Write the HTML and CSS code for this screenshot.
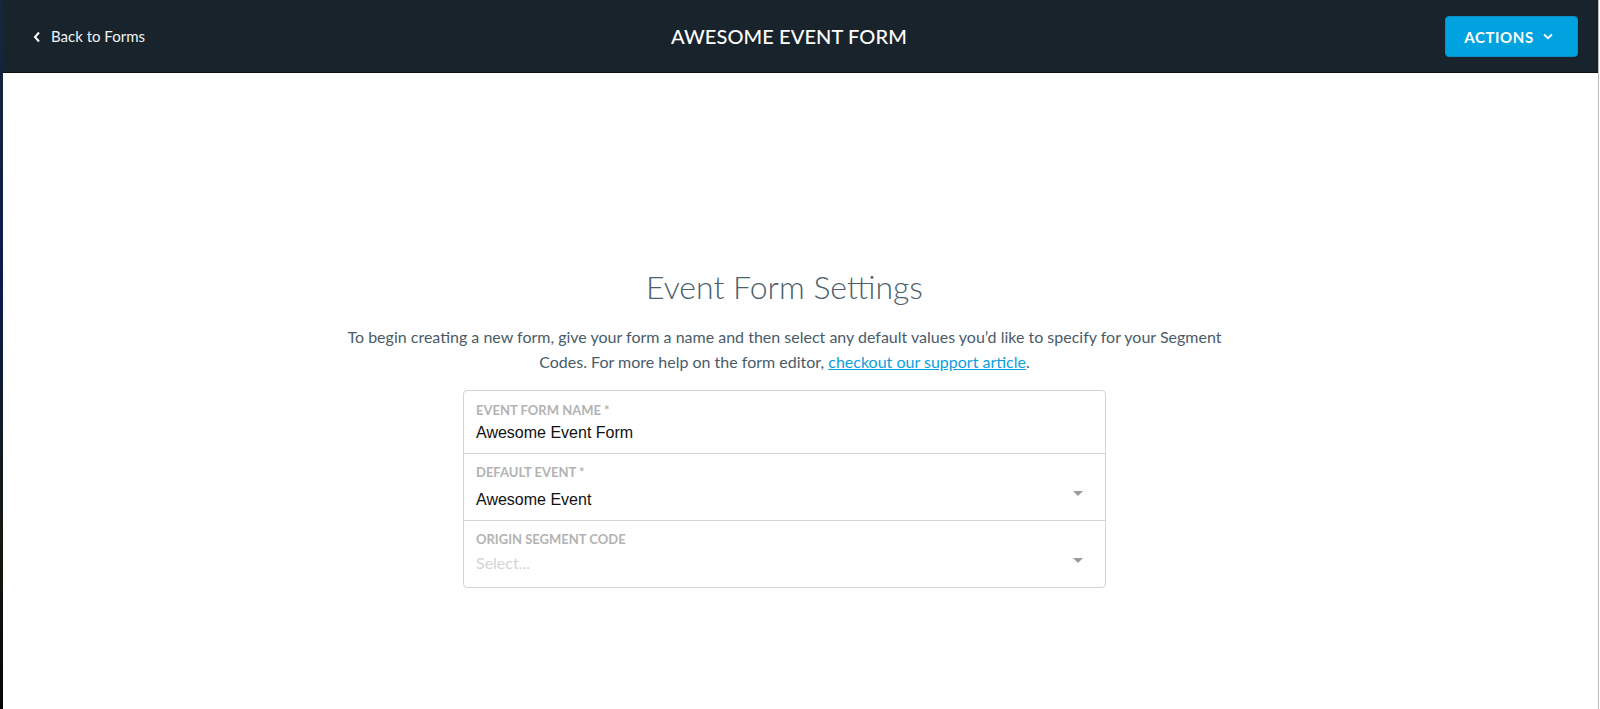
FILE: index.html
```html
<!DOCTYPE html>
<html lang="en">
<head>
<meta charset="utf-8">
<title>Awesome Event Form</title>
<link rel="stylesheet" href="styles.css">
</head>
<body>
<div class="frame">
  <div class="desk"></div>
  <div class="app">
    <header class="topbar">
      <a class="back" href="#">
        <svg class="back-icon" width="8" height="12" viewBox="0 0 8 12"><path d="M6 1.5 L2 6 L6 10.5" fill="none" stroke="#fff" stroke-width="2"/></svg>
        <span>Back to Forms</span>
      </a>
      <h1 class="title">AWESOME EVENT FORM</h1>
      <button class="actions">ACTIONS
        <svg class="actions-icon" width="10" height="7" viewBox="0 0 10 7"><path d="M1 1.5 L5 5.2 L9 1.5" fill="none" stroke="#fff" stroke-width="1.8"/></svg>
      </button>
    </header>
    <main class="content">
      <h2 class="heading">Event Form Settings</h2>
      <p class="intro">To begin creating a new form, give your form a name and then select any default values you’d like to specify for your Segment Codes. For more help on the form editor, <a href="#" class="link">checkout our support article</a>.</p>
      <div class="fields">
        <div class="field field-first">
          <div class="label">EVENT FORM NAME *</div>
          <div class="value value-input">Awesome Event Form</div>
        </div>
        <div class="field field-select field-mid">
          <div class="field-body">
            <div class="label">DEFAULT EVENT *</div>
            <div class="value value-select">Awesome Event</div>
          </div>
          <span class="caret"></span>
        </div>
        <div class="field field-select field-last">
          <div class="field-body">
            <div class="label">ORIGIN SEGMENT CODE</div>
            <div class="value placeholder">Select...</div>
          </div>
          <span class="caret"></span>
        </div>
      </div>
    </main>
  </div>
  <div class="edge"></div>
</div>
</body>
</html>
```
FILE: styles.css
```css
html, body {
  margin: 0;
  padding: 0;
  height: 100%;
}
body {
  font-family: Lato, "Open Sans", sans-serif;
  background: #fff;
  overflow: hidden;
}
.frame {
  display: flex;
  height: 709px;
}
.desk {
  width: 3px;
  flex: none;
  background: linear-gradient(180deg, #18263a 0%, #0c1c4a 40%, #151a10 75%, #060606 100%);
}
.app {
  flex: 1;
  display: flex;
  flex-direction: column;
  background: #fff;
}
.edge {
  width: 1px;
  flex: none;
  background: #bdbdbd;
  border-right: 1px solid #fff;
}
.topbar {
  height: 72px;
  flex: none;
  background: #19232b;
  border-bottom: 1px solid #0b1014;
  display: flex;
  align-items: center;
  justify-content: space-between;
  padding: 0 20px 0 30px;
}
.back {
  display: flex;
  align-items: center;
  gap: 10px;
  color: #f2f4f5;
  text-decoration: none;
  font-size: 15px;
  width: 200px;
}
.back-icon {
  display: block;
  margin-top: 1px;
}
.title {
  margin: 0 0 0 -100px;
  color: #fff;
  font-size: 20px;
  font-weight: 500;
  letter-spacing: 0.1px;
}
.actions {
  width: 133px;
  height: 41px;
  background: #00a3e0;
  border: 1px solid #0a8fc4;
  border-radius: 4px;
  color: #fff;
  font-family: Lato, sans-serif;
  font-weight: 700;
  font-size: 15px;
  letter-spacing: 0.6px;
  display: flex;
  align-items: center;
  justify-content: center;
  gap: 9px;
  padding: 0 6px 0 0;
  margin-top: 1px;
}
.actions-icon {
  display: block;
}
.content {
  display: flex;
  flex-direction: column;
  align-items: center;
  padding: 194px 32px 0 0;
}
.heading {
  margin: 0;
  font-weight: 300;
  font-size: 32px;
  line-height: 40px;
  color: #4d5f6d;
}
.intro {
  margin: 18px 0 0;
  width: 880px;
  text-align: center;
  font-size: 16px;
  line-height: 24.5px;
  color: #4a5b68;
}
.link {
  color: #0aa0dc;
  text-decoration: underline;
}
.fields {
  margin-top: 16px;
  width: 641px;
  border: 1px solid #d4d4d4;
  border-radius: 4px;
}
.field {
  padding: 0 22px 0 12px;
  border-top: 1px solid #d4d4d4;
}
.field-first {
  border-top: none;
  height: 62px;
  padding-top: 11px;
  box-sizing: border-box;
}
.field-select {
  height: 67px;
  box-sizing: border-box;
  display: flex;
  align-items: flex-start;
}
.field-mid {
  padding-top: 10px;
}
.field-last {
  height: 67px;
  padding-top: 10px;
}
.field-body {
  flex: 1;
}
.label {
  font-size: 13px;
  font-weight: 700;
  color: #b3b3b3;
  line-height: 16px;
  letter-spacing: 0;
}
.value {
  font-size: 16px;
  line-height: 20px;
}
.value-input {
  font-family: "Liberation Sans", Arial, sans-serif;
  color: #111;
  margin-top: 5px;
}
.value-select {
  font-family: "Liberation Sans", Arial, sans-serif;
  color: #111;
  margin-top: 10px;
}
.placeholder {
  color: #d4d4d4;
  margin-top: 6px;
}
.caret {
  width: 0;
  height: 0;
  border-left: 5px solid transparent;
  border-right: 5px solid transparent;
  border-top: 5px solid #9a9a9a;
  margin-top: 27px;
}
```
